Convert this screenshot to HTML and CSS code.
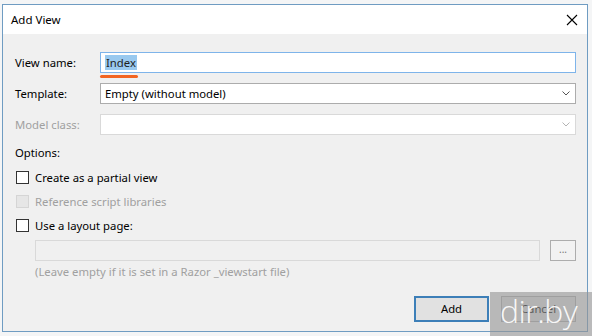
FILE: index.html
```html
<!DOCTYPE html>
<html lang="en">
<head>
  <meta charset="UTF-8">
  <title>Add View</title>
  <link rel="stylesheet" href="styles.css">
</head>
<body>
  <div class="dialog">
    <div class="titlebar">
      <span class="title">Add View</span>
      <svg class="close" width="12" height="12" viewBox="0 0 12 12">
        <path d="M1 1 L11 11 M11 1 L1 11" stroke="#000" stroke-width="1.1" fill="none"/>
      </svg>
    </div>

    <div class="content">
      <div class="row">
        <label class="lbl">View name:</label>
        <div class="field focus">
          <span class="sel-text">Index</span>
          <span class="mark"></span>
        </div>
      </div>
      <div class="row">
        <label class="lbl">Template:</label>
        <div class="field combo">
          <span>Empty (without model)</span>
          <svg class="chev" width="8" height="5" viewBox="0 0 8 5"><path d="M0.5 0.5 L4 4 L7.5 0.5" stroke="#555" fill="none"/></svg>
        </div>
      </div>
      <div class="row">
        <label class="lbl off">Model class:</label>
        <div class="field combo disabled">
          <span></span>
          <svg class="chev" width="8" height="5" viewBox="0 0 8 5"><path d="M0.5 0.5 L4 4 L7.5 0.5" stroke="#b4b4b4" fill="none"/></svg>
        </div>
      </div>

      <div class="options">Options:</div>

      <div class="check"><span class="box"></span>Create as a partial view</div>
      <div class="check off"><span class="box"></span>Reference script libraries</div>
      <div class="check"><span class="box"></span>Use a layout page:</div>

      <div class="layout-row">
        <div class="field flat"></div>
        <div class="dots">...</div>
      </div>
      <div class="hint">(Leave empty if it is set in a Razor _viewstart file)</div>

      <div class="buttons">
        <div class="btn primary">Add</div>
        <div class="btn">Cancel</div>
      </div>
    </div>
  </div>

  <div class="watermark">dir.by</div>
</body>
</html>
```

FILE: styles.css
```css
*{
  margin: 0;
  padding: 0;
  box-sizing: border-box;
}

body{
  width: 592px;
  height: 336px;
  overflow: hidden;
  background: #f4f5f6;
  font-family: "Noto Sans", "Open Sans", sans-serif;
  font-size: 11.3px;
  color: #000;
}

.dialog{
  margin: 4px 0 0 2px;
  width: 586px;
  height: 328px;
  border: 1px solid #6f9cc2;
  background: #f0f0f0;
}

.titlebar{
  display: flex;
  align-items: center;
  justify-content: space-between;
  height: 29px;
  padding: 0 9px 0 8px;
  background: #fff;
}

.title{
  font-size: 11.5px;
}

.close{
  margin-top: 1px;
}

.content{
  padding: 18px 11px 0 12px;
}

.row{
  display: flex;
  align-items: center;
  height: 21px;
  margin-bottom: 10px;
}

.lbl{
  width: 85px;
}

.off{
  color: #a0a0a0;
}

.field{
  position: relative;
  flex: 1;
  height: 21px;
  border: 1px solid #acacac;
  background: #fff;
  display: flex;
  align-items: center;
  padding-left: 4px;
}

.field.focus{
  border-color: #7eb4ea;
}

.sel-text{
  background: #99c9ef;
  line-height: 15px;
  padding: 0 1px;
  color: #1e1e1e;
}

.mark{
  position: absolute;
  left: -1px;
  top: 22px;
  width: 38px;
  height: 3px;
  border-radius: 2px;
  background: #f26522;
}

.combo{
  justify-content: space-between;
  padding-right: 5px;
}

.field.disabled{
  border-color: #d9d9d9;
}

.options{
  margin-top: 8px;
  height: 19px;
}

.check{
  display: flex;
  align-items: center;
  height: 13px;
  margin-top: 7px;
}

.check + .check{
  margin-top: 11px;
}

.box{
  width: 13px;
  height: 13px;
  border: 1px solid #333;
  background: #fff;
  margin: 0 6px 0 1px;
}

.check.off .box{
  border-color: #d5d5d5;
  background: #e6e6e6;
}

.layout-row{
  display: flex;
  margin: 8px 0 0 20px;
  height: 21px;
}

.field.flat{
  background: #f0f0f0;
  border-color: #d9d9d9;
}

.dots{
  width: 26px;
  height: 21px;
  margin-left: 10px;
  border: 1px solid #adadad;
  background: #f2f2f2;
  color: #777;
  font-size: 10px;
  text-align: center;
  line-height: 16px;
}

.hint{
  margin: 3px 0 0 20px;
  color: #a0a0a0;
}

.buttons{
  display: flex;
  justify-content: flex-end;
  gap: 12px;
  margin-top: 17px;
}

.btn{
  width: 75px;
  height: 26px;
  border: 1px solid #adadad;
  background: #e1e1e1;
  text-align: center;
  line-height: 23px;
}

.btn.primary{
  border: 2px solid #3d7fb8;
  line-height: 21px;
}

.watermark{
  position: absolute;
  left: 490px;
  top: 292px;
  width: 102px;
  height: 44px;
  background: rgba(150, 150, 150, 0.62);
  color: rgba(255, 255, 255, 0.92);
  font-family: "Open Sans", sans-serif;
  font-weight: 300;
  font-size: 32px;
  line-height: 38px;
  padding-left: 10px;
  letter-spacing: -0.5px;
}
```
